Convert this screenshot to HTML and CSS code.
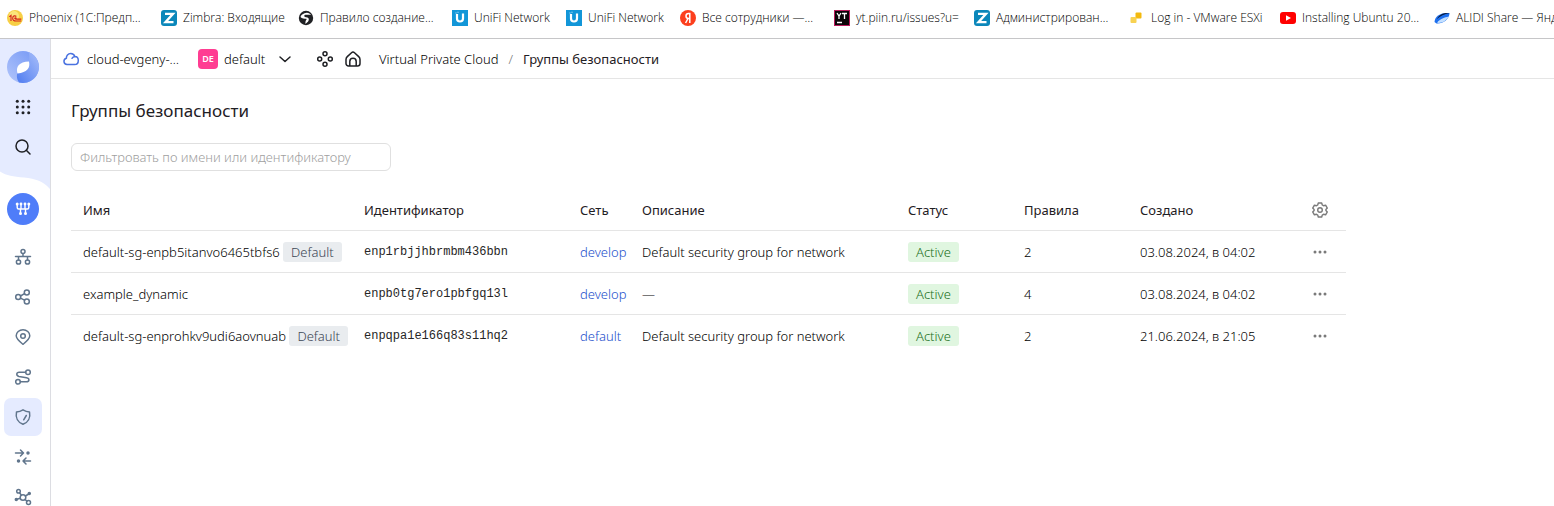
FILE: index.html
```html
<!DOCTYPE html>
<html lang="ru">
<head>
<meta charset="utf-8">
<title>Группы безопасности</title>
<link rel="stylesheet" href="styles.css">
</head>
<body>
<nav class="bookmarks" aria-label="Закладки">
  <a class="bookmark" href="#"><svg class="favicon" viewBox="0 0 16 16"><circle cx="8" cy="8" r="8" fill="#f7cf45"/><circle cx="7" cy="6" r="5" fill="#fbe57c"/><path d="M2.300 6.800 4 5.500V11M9.300 6.500C8.300 5.300 5.700 5.500 5.700 8.200s2 2.800 3.500 2.800H14.300M9.500 8.300c-.8-.8-1.900-.4-1.700.3.2.5.700.500 1.700.500H14.300" fill="none" stroke="#d6261c" stroke-width="1.200"/></svg><span>Phoenix (1С:Предп…</span></a>
  <a class="bookmark" href="#"><svg class="favicon" viewBox="0 0 16 16"><rect width="16" height="16" rx="3" fill="#0b87ba"/><path d="M4 3.800h8L4.500 12.200H12.500" fill="none" stroke="#fff" stroke-width="2.300"/></svg><span>Zimbra: Входящие</span></a>
  <a class="bookmark" href="#"><svg class="favicon" viewBox="0 0 16 16"><circle cx="8" cy="8" r="7.200" fill="#202124"/><path d="M6.500 3.300C9 1.800 12 3 13.300 5.300 12 4.500 10.500 5 9.500 4.800 8 4.600 6 4.500 6.300 6.200c.3 1.300 3.200.8 4.200 2 .8 1.300 0 3.300-1.500 4.300-.6.500-1 1.300-1.700 1.200.3-1.400 0-2.200.6-3.200.5-1 1.200-1.200.3-1.700C6.500 8.500 3.800 8.800 2.500 7c.4-1.700 2-2.900 4-3.700z" fill="#fff"/></svg><span>Правило создание…</span></a>
  <a class="bookmark" href="#"><svg class="favicon" viewBox="0 0 16 16"><rect width="16" height="16" fill="#1296d8"/><path d="M5 4v4.500a3 3 0 0 0 6 0V3.500" fill="none" stroke="#fff" stroke-width="2.200"/><path d="M3.500 2.500h1v1h-1zM5.500 1.800h1v1h-1z" fill="#c9ebff"/></svg><span>UniFi Network</span></a>
  <a class="bookmark" href="#"><svg class="favicon" viewBox="0 0 16 16"><rect width="16" height="16" fill="#1296d8"/><path d="M5 4v4.500a3 3 0 0 0 6 0V3.500" fill="none" stroke="#fff" stroke-width="2.200"/><path d="M3.500 2.500h1v1h-1zM5.500 1.800h1v1h-1z" fill="#c9ebff"/></svg><span>UniFi Network</span></a>
  <a class="bookmark" href="#"><svg class="favicon" viewBox="0 0 16 16"><circle cx="8" cy="8" r="8" fill="#fc3f1d"/><path d="M9.800 13V3.600H8.500C6.800 3.600 6 4.600 6 6c0 1.600.9 2.500 2.500 2.500H9.800M8 8.500 5.600 13" fill="none" stroke="#fff" stroke-width="1.500"/></svg><span>Все сотрудники —…</span></a>
  <a class="bookmark" href="#"><svg class="favicon" viewBox="0 0 16 16"><rect width="16" height="16" fill="#b81b5c"/><rect x="1" y="1" width="14" height="14" fill="#0b0508"/><path d="M3 3l2 3 2-3M5 6v3M8 3.500h5M10.500 3.500V9M3 12.500h5" fill="none" stroke="#fff" stroke-width="1.300"/></svg><span>yt.piin.ru/issues?u=</span></a>
  <a class="bookmark" href="#"><svg class="favicon" viewBox="0 0 16 16"><rect width="16" height="16" rx="3" fill="#0b87ba"/><path d="M4 3.800h8L4.500 12.200H12.500" fill="none" stroke="#fff" stroke-width="2.300"/></svg><span>Администрирован…</span></a>
  <a class="bookmark" href="#"><svg class="favicon" viewBox="0 0 16 16"><rect x="6.500" y="2.500" width="6" height="6" rx="1" fill="#f3b90e"/><rect x="1.500" y="7" width="6" height="6" rx="1" fill="#f8d252"/></svg><span>Log in - VMware ESXi</span></a>
  <a class="bookmark" href="#"><svg class="favicon" viewBox="0 0 16 16"><rect y="2" width="16" height="12" rx="3" fill="#f00"/><path d="M6 5.300 11 8l-5 2.700z" fill="#fff"/></svg><span>Installing Ubuntu 20…</span></a>
  <a class="bookmark" href="#"><svg class="favicon" viewBox="0 0 16 16"><path d="M.5 12C1 6 6 2.500 15.500 3 15.500 9 9 14 2.500 13.500z" fill="#1d6fee"/><path d="M3 9C5.500 4.500 9 2.700 15.500 3 10.500 4 6 6 3 9z" fill="#0b1c3c"/><path d="M3 12.800C6 8.500 11 7.500 14.500 6.500 12.500 10.800 8 13.500 3 12.800z" fill="#c4e0ff"/></svg><span>ALIDI Share — Янд</span></a>
</nav>
<div class="app">
  <aside class="sidebar">
    <div class="sidebar-top">
      <a class="side-item" href="#" aria-label="Yandex Cloud"><svg width="32" height="32" viewBox="0 0 32 32"><defs><linearGradient id="la" x1="0" y1="1" x2="1" y2="0"><stop offset="0" stop-color="#b3c6fb"/><stop offset="1" stop-color="#7296f5"/></linearGradient><linearGradient id="lb" x1="0" y1="1" x2="1" y2="0"><stop offset="0" stop-color="#4f7cf0"/><stop offset="1" stop-color="#a9bffa"/></linearGradient></defs><circle cx="16" cy="16" r="16" fill="url(#la)"/><path d="M21.500 1A16 16 0 0 1 12 31.500C9.500 28 9.500 24 10.500 22L21.500 10.500C22.500 7 22.500 4 21.500 1z" fill="url(#lb)"/><path d="M10.500 22.500C8.500 15.500 12 11 22 10.500 23.500 17 20 21.500 10.500 22.500z" fill="#fff"/></svg></a>
      <button class="side-item dark" aria-label="Все сервисы"><svg class="icon" viewBox="0 0 16 16" fill="currentColor"><circle cx="2.300" cy="2.300" r="1.500"/><circle cx="8" cy="2.300" r="1.500"/><circle cx="13.700" cy="2.300" r="1.500"/><circle cx="2.300" cy="8" r="1.500"/><circle cx="8" cy="8" r="1.500"/><circle cx="13.700" cy="8" r="1.500"/><circle cx="2.300" cy="13.700" r="1.500"/><circle cx="8" cy="13.700" r="1.500"/><circle cx="13.700" cy="13.700" r="1.500"/></svg></button>
      <button class="side-item dark" aria-label="Поиск"><svg class="icon line" viewBox="0 0 16 16"><circle cx="7" cy="7" r="6"/><path d="m11.300 11.300 3.700 3.700"/></svg></button>
    </div>
    <svg class="wave" viewBox="0 0 50 22" preserveAspectRatio="none"><path d="M0 0H50V22C43 14 36 12 24 10.500 13 9.500 7 9 0 4.500z" fill="#e5ebff"/></svg>
    <div class="side-list">
      <a class="side-item service" href="#" aria-label="Virtual Private Cloud"><span class="service-disc"><svg class="icon" viewBox="0 0 16 16" fill="none" stroke="#fff" stroke-width="1.400"><path d="M2.200 3v3.500q0 1.500 1.500 1.500h8.600q1.500 0 1.500-1.500V3M6 3.500V8M10 3.500V8M5.500 8v4M10.500 8v4"/><g fill="#fff" stroke="none"><circle cx="2.200" cy="3" r="1.500"/><circle cx="6" cy="3" r="1.400"/><circle cx="10" cy="3" r="1.400"/><circle cx="13.800" cy="3" r="1.500"/><circle cx="5.500" cy="12.500" r="1.500"/><circle cx="10.500" cy="12.500" r="1.500"/></g></svg></span></a>
      <a class="side-item" href="#" aria-label="Облачные сети"><svg class="icon line" viewBox="0 0 16 16"><circle cx="8" cy="2.500" r="2"/><circle cx="3.500" cy="13" r="2.100"/><circle cx="12.500" cy="13" r="2.100"/><path d="M8 4.500V7.500M.5 7.500h15M3.500 7.500V11M12.500 7.500V11"/></svg></a>
      <a class="side-item" href="#" aria-label="Подсети"><svg class="icon line" viewBox="0 0 16 16"><circle cx="3.200" cy="8" r="2.500"/><circle cx="11.800" cy="3.500" r="2.500"/><circle cx="11.800" cy="12.500" r="2.500"/><path d="m5.500 7 4-2.300M5.500 9.200l4 2"/></svg></a>
      <a class="side-item" href="#" aria-label="IP-адреса"><svg class="icon line" viewBox="0 0 16 16"><path d="M8 15.300C4.500 12.500 1.200 10 1.200 6.800a6.800 6 0 0 1 13.600 0C14.800 10 11.500 12.500 8 15.300z"/><circle cx="8" cy="7" r="2.300"/></svg></a>
      <a class="side-item" href="#" aria-label="Таблицы маршрутизации"><svg class="icon line" viewBox="0 0 16 16"><circle cx="13" cy="3.200" r="2.300"/><circle cx="3" cy="12.800" r="2.300"/><path d="M10.700 3.200H4.300C1 3.200 1 6.800 4 7.500l7.500 1.300c3.500.7 3 4-.2 4H5.300"/></svg></a>
      <a class="side-item selected" href="#" aria-label="Группы безопасности"><svg class="icon line" viewBox="0 0 16 16"><path d="M8 .8c2 1.200 4.500 2 6.500 2.200C15.800 9 13 13.500 8 15.300 3 13.500.2 9 1.500 3 3.500 2.800 6 2 8 .8zM8.700 10.800l2.600-4.300"/></svg></a>
      <a class="side-item" href="#" aria-label="Шлюзы"><svg class="icon line" viewBox="0 0 16 16"><path d="M.5 4h8M5.500 1l3 3-3 3M15.500 12H8M11 9l-3 3 3 3"/><circle cx="13" cy="4" r="1" fill="currentColor"/><circle cx="3.500" cy="12" r="1" fill="currentColor"/></svg></a>
      <a class="side-item" href="#" aria-label="Сетевые подключения"><svg class="icon line" viewBox="0 0 16 16"><circle cx="8" cy="8.500" r="2.800"/><circle cx="3.500" cy="2.300" r="1.800"/><circle cx="13.500" cy="13.500" r="2"/><path d="m4.600 3.800 1.600 2.200M10.300 7l3.500-2M10 10.500l2 1.600M5.300 9.300 1 10.500"/><circle cx="14.300" cy="4.500" r="1" fill="currentColor"/><circle cx="1.300" cy="10.500" r="1" fill="currentColor"/></svg></a>
    </div>
  </aside>
  <div class="content">
    <header class="topbar">
      <a class="cloud" href="#"><svg class="icon line" viewBox="0 0 16 16"><path d="M4 13.500a3.200 3.200 0 0 1-.6-6.300C3.200 4.700 5 2.500 7.700 2.500c2 0 3.600 1.200 4.200 3.100 2 .1 3.400 1.700 3.400 3.800 0 2.400-1.600 4.100-3.800 4.100zM9 7.300C9.800 6 10.700 5.500 12 5.700"/></svg><span>cloud-evgeny-…</span></a>
      <button class="folder"><span class="folder-badge">DE</span><span class="folder-name">default</span><svg class="icon line" viewBox="0 0 16 16"><path d="m3 6 5 4.500L13 6"/></svg></button>
      <div class="shortcuts">
        <a href="#" aria-label="Ресурсы"><svg class="icon line" viewBox="0 0 16 16"><circle cx="8" cy="2.700" r="2"/><circle cx="8" cy="13.300" r="2"/><circle cx="2.700" cy="8" r="2"/><circle cx="13.300" cy="8" r="2"/></svg></a>
        <a href="#" aria-label="Главная"><svg class="icon line" viewBox="0 0 16 16"><path d="M1 8.500c0-1.500.3-2 1.300-2.900L6.500 1.700c1-.9 2-.9 3 0l4.200 3.900c1 .9 1.300 1.400 1.300 2.900v4a2.500 2.500 0 0 1-2.500 2.500h-9A2.500 2.500 0 0 1 1 12.500zM4.800 15V10.500a3.200 3.200 0 0 1 6.400 0V15"/></svg></a>
      </div>
      <nav class="crumbs" aria-label="Навигация"><a href="#">Virtual Private Cloud</a><span class="slash">/</span><span class="current">Группы безопасности</span></nav>
    </header>
    <main class="page">
      <h1>Группы безопасности</h1>
      <input class="filter" type="text" aria-label="Фильтр" placeholder="Фильтровать по имени или идентификатору">
      <table class="groups">
        <colgroup><col class="c-name"><col class="c-id"><col class="c-net"><col class="c-desc"><col class="c-short"><col class="c-short"><col class="c-date"><col class="c-menu"></colgroup>
        <thead><tr><th>Имя</th><th>Идентификатор</th><th>Сеть</th><th>Описание</th><th>Статус</th><th>Правила</th><th>Создано</th><th class="menu"><button aria-label="Настройки таблицы"><svg class="icon" viewBox="0 0 16 16" fill="none" stroke="currentColor" stroke-width="1.400" stroke-linejoin="round"><path d="M6.300 1h3.400l.6 2 1.200.7 2.100-.5 1.700 2.900L13.900 7.500v1l1.400 1.400-1.700 2.900-2.100-.5-1.200.7-.6 2H6.300l-.6-2-1.200-.7-2.100.5L.7 9.900 2.100 8.500v-1L.7 6.100l1.700-2.900 2.100.5L5.700 3z"/><circle cx="8" cy="8" r="2.300"/></svg></button></th></tr></thead>
        <tbody>
          <tr><td>default-sg-enpb5itanvo6465tbfs6 <span class="label">Default</span></td><td class="mono">enp1rbjjhbrmbm436bbn</td><td><a href="#">develop</a></td><td>Default security group for network</td><td><span class="label active">Active</span></td><td>2</td><td>03.08.2024, в 04:02</td><td class="menu"><button aria-label="Действия"><svg class="icon" viewBox="0 0 16 16" fill="currentColor"><circle cx="3" cy="8" r="1.500"/><circle cx="8" cy="8" r="1.500"/><circle cx="13" cy="8" r="1.500"/></svg></button></td></tr>
          <tr><td>example_dynamic</td><td class="mono">enpb0tg7ero1pbfgq13l</td><td><a href="#">develop</a></td><td>—</td><td><span class="label active">Active</span></td><td>4</td><td>03.08.2024, в 04:02</td><td class="menu"><button aria-label="Действия"><svg class="icon" viewBox="0 0 16 16" fill="currentColor"><circle cx="3" cy="8" r="1.500"/><circle cx="8" cy="8" r="1.500"/><circle cx="13" cy="8" r="1.500"/></svg></button></td></tr>
          <tr><td>default-sg-enprohkv9udi6aovnuab <span class="label">Default</span></td><td class="mono">enpqpa1e166q83s11hq2</td><td><a href="#">default</a></td><td>Default security group for network</td><td><span class="label active">Active</span></td><td>2</td><td>21.06.2024, в 21:05</td><td class="menu"><button aria-label="Действия"><svg class="icon" viewBox="0 0 16 16" fill="currentColor"><circle cx="3" cy="8" r="1.500"/><circle cx="8" cy="8" r="1.500"/><circle cx="13" cy="8" r="1.500"/></svg></button></td></tr>
        </tbody>
      </table>
    </main>
  </div>
</div>
</body>
</html>
```
FILE: styles.css
```css
* { box-sizing: border-box; }
body {
  margin: 0;
  height: 100vh;
  display: flex;
  flex-direction: column;
  overflow: hidden;
  background: #fff;
  color: #000;
  font: 300 13px/20px "Noto Sans", "Open Sans", sans-serif;
}
a { color: inherit; text-decoration: none; }
button { padding: 0; border: 0; background: none; color: inherit; font: inherit; cursor: pointer; }
svg { display: block; flex: none; }
.icon { width: 16px; height: 16px; }
.line { fill: none; stroke: currentColor; stroke-width: 1.5; stroke-linecap: round; stroke-linejoin: round; overflow: visible; }

.bookmarks {
  flex: none;
  display: grid;
  grid-template-columns: 154px 137px 154px 114px 114px 154px 140px 155px 151px 154px auto;
  align-items: center;
  height: 39px;
  padding: 0 0 3px 7px;
  border-bottom: 1px solid #c6c6c8;
  font: 300 12px/16px "Open Sans", sans-serif;
}
.bookmark { display: flex; align-items: center; gap: 6px; white-space: nowrap; }
.favicon { width: 16px; height: 16px; }

.app { flex: 1; min-height: 0; display: flex; }
.sidebar { flex: none; width: 51px; border-right: 1px solid #dcdde2; color: #60758c; overflow: hidden; }
.sidebar-top { display: flex; flex-direction: column; gap: 2px; padding: 9px 4px 1px; background: #e5ebff; }
.wave { width: 100%; height: 22px; }
.side-list { display: flex; flex-direction: column; gap: 2px; padding: 1px 4px; }
.side-item { flex: none; display: flex; align-items: center; justify-content: center; width: 38px; height: 38px; border-radius: 7px; }
.dark { color: #1f2024; }
.selected { background: #e5ebff; }
.service { margin-bottom: 8px; }
.service-disc { display: flex; align-items: center; justify-content: center; width: 32px; height: 32px; border-radius: 50%; background: #4f7df9; }

.content { flex: 1; min-width: 0; }
.topbar { display: flex; align-items: center; height: 40px; padding: 0 12px; border-bottom: 1px solid #e5e5e5; white-space: nowrap; }
.cloud { display: flex; align-items: center; gap: 8px; width: 135px; }
.cloud svg { color: #4a72e0; }
.folder { display: flex; align-items: center; width: 112px; }
.folder-badge { width: 20px; border-radius: 4px; background: #ff3d92; color: #fff; font-size: 9px; font-weight: 600; text-align: center; }
.folder-name { width: 54px; padding-left: 6px; text-align: left; }
.folder svg { margin-left: 5px; color: #1f2024; }
.shortcuts { display: flex; gap: 12px; padding: 0 18px 0 7px; color: #1f2024; }
.crumbs { display: flex; gap: 10px; }
.slash { color: #777; }
.current { color: #1f2024; font-weight: 400; }

.page { padding: 20px; }
h1 { margin: 0 0 20px; color: #1f2024; font-size: 17px; font-weight: 400; line-height: 24px; }
.filter { display: block; width: 320px; height: 28px; padding: 0 8px; border: 1px solid #e0e0e0; border-radius: 6px; outline: 0; font: inherit; }
.filter::placeholder { color: #a0a0a0; }
.groups { width: 100%; max-width: 1275px; margin-top: 19px; table-layout: fixed; border-collapse: separate; border-spacing: 0; }
.c-name { width: 285px; }
.c-id { width: 216px; }
.c-net { width: 62px; }
.c-desc { width: 266px; }
.c-short { width: 116px; }
.c-date { width: 162px; }
.c-menu { width: 52px; }
th, td { height: 42px; padding: 0 8px; border-bottom: 1px solid #e5e5e5; text-align: left; white-space: nowrap; }
th { height: 41px; color: #1f2024; font-weight: 400; }
th:first-child, td:first-child { padding-left: 12px; }
tbody tr:last-child td { border-bottom: 0; }
td a { color: #2450cc; }
.mono { color: #262626; font: 12px/20px "Liberation Mono", monospace; }
.label { display: inline-block; padding: 0 8px; border-radius: 3px; background: #e9ecef; color: #3c4655; }
.active { background: #e0f6e0; color: #1c7022; }
th.menu, td.menu { color: #7a7a7a; }
.menu button { display: block; margin: 0 auto; }
```
